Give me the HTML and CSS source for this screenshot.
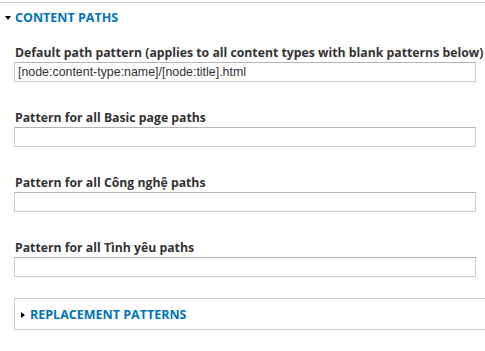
FILE: index.html
```html
<!DOCTYPE html>
<html lang="vi">
<head>
    <meta charset="UTF-8">
    <title>Pathauto patterns</title>
    <link rel="stylesheet" href="styles.css">
</head>
<body>
    <div class="fieldset">
        <div class="legend">
            <span class="arrow-down"></span>
            <a class="legend-link">CONTENT PATHS</a>
        </div>
        <div class="fieldset-body">
            <div class="form-item">
                <label>Default path pattern (applies to all content types with blank patterns below)</label>
                <input type="text" class="form-text" value="[node:content-type:name]/[node:title].html">
            </div>
            <div class="form-item">
                <label>Pattern for all Basic page paths</label>
                <input type="text" class="form-text" value="">
            </div>
            <div class="form-item">
                <label>Pattern for all Công nghệ paths</label>
                <input type="text" class="form-text" value="">
            </div>
            <div class="form-item">
                <label>Pattern for all Tình yêu paths</label>
                <input type="text" class="form-text" value="">
            </div>
            <div class="fieldset collapsed">
                <div class="legend">
                    <span class="arrow-right"></span>
                    <a class="legend-link">REPLACEMENT PATTERNS</a>
                </div>
            </div>
        </div>
    </div>
</body>
</html>
```

FILE: styles.css
```css
body {
    margin: 0;
    padding-top: 2px;
    background: #fff;
    font-family: "Open Sans", "Noto Sans", sans-serif;
    color: #333;
    overflow: hidden;
}

.fieldset {
    border-top: 1px solid #ccc;
}

.legend {
    display: flex;
    align-items: center;
    height: 28px;
    padding-left: 5px;
}

.legend-link {
    color: #0074bd;
    font-weight: bold;
    font-size: 12.5px;
}

.arrow-down {
    width: 0;
    height: 0;
    border-left: 3px solid transparent;
    border-right: 3px solid transparent;
    border-top: 4px solid #000;
    margin-right: 4px;
    margin-top: 1px;
}

.arrow-right {
    width: 0;
    height: 0;
    border-top: 3px solid transparent;
    border-bottom: 3px solid transparent;
    border-left: 4px solid #000;
    margin-right: 5px;
    margin-top: 1px;
}

.fieldset-body {
    padding: 14px 0 0 14px;
}

.form-item {
    display: flex;
    flex-direction: column;
}

.form-item + .form-item {
    margin-top: 28px;
}

.form-item label {
    font-size: 12.25px;
    font-weight: bold;
    line-height: 16px;
    margin: 0 0 1px 1px;
    white-space: nowrap;
}

.form-text {
    box-sizing: border-box;
    width: 462px;
    height: 20px;
    margin: 0;
    padding: 1px 3px;
    border: 1px solid #ccc;
    border-top-color: #b4b4b4;
    border-radius: 0;
    font-family: "Liberation Sans", Arial, sans-serif;
    font-size: 12.4px;
    color: #333;
    outline: none;
}

.fieldset.collapsed {
    border: 1px solid #ccc;
    border-right: none;
    margin-top: 21px;
}

.fieldset.collapsed .legend {
    height: 30px;
    padding-left: 6px;
}
```
